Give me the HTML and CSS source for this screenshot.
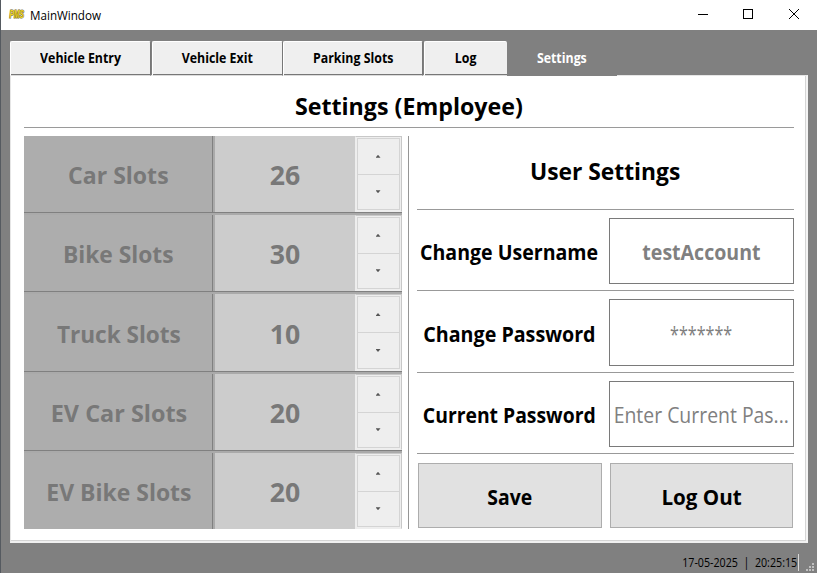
FILE: index.html
```
<!DOCTYPE html>
<html lang="en">
<head>
<meta charset="utf-8">
<title>MainWindow</title>
<link rel="stylesheet" href="styles.css">
</head>
<body>
<div class="window">
  <header class="titlebar">
    <svg class="app-icon" width="18" height="13" viewBox="0 0 18 13">
      <text class="logo" x="0.500" y="10" textLength="14.500" lengthAdjust="spacingAndGlyphs">PMS</text>
    </svg>
    <span class="title"><span class="t-title">MainWindow</span></span>
    <svg class="controls" width="103" height="12" viewBox="0 0 103 12" fill="none" stroke="#000">
      <path d="M0 6.500h10"/>
      <rect x="45.500" y="1.500" width="9" height="9"/>
      <path d="M91 1l10 10M101 1L91 11"/>
    </svg>
  </header>
  <nav class="tabs">
    <div class="tab tab-entry"><span>Vehicle Entry</span></div>
    <div class="tab tab-exit"><span>Vehicle Exit</span></div>
    <div class="tab tab-parking"><span>Parking Slots</span></div>
    <div class="tab tab-log"><span>Log</span></div>
    <div class="tab tab-settings"><span>Settings</span></div>
  </nav>
  <main class="pane">
    <h1><span class="t-heading">Settings (Employee)</span></h1>
    <div class="columns">
      <section class="slots">
        <div class="slot"><div class="name"><span class="t-car">Car Slots</span></div><div class="value">26</div><div class="spin"><div class="step"><i class="up"></i></div><div class="step"><i class="down"></i></div></div></div>
        <div class="slot"><div class="name"><span class="t-bike">Bike Slots</span></div><div class="value">30</div><div class="spin"><div class="step"><i class="up"></i></div><div class="step"><i class="down"></i></div></div></div>
        <div class="slot"><div class="name"><span class="t-truck">Truck Slots</span></div><div class="value">10</div><div class="spin"><div class="step"><i class="up"></i></div><div class="step"><i class="down"></i></div></div></div>
        <div class="slot"><div class="name"><span class="t-evcar">EV Car Slots</span></div><div class="value">20</div><div class="spin"><div class="step"><i class="up"></i></div><div class="step"><i class="down"></i></div></div></div>
        <div class="slot"><div class="name"><span class="t-evbike">EV Bike Slots</span></div><div class="value">20</div><div class="spin"><div class="step"><i class="up"></i></div><div class="step"><i class="down"></i></div></div></div>
      </section>
      <section class="user">
        <h2><span class="t-user">User Settings</span></h2>
        <div class="field"><label><span class="t-cu">Change Username</span></label><div class="input strong"><span class="t-acc">testAccount</span></div></div>
        <div class="field tall"><label><span class="t-cp">Change Password</span></label><div class="input"><span class="t-stars">*******</span></div></div>
        <div class="field"><label><span class="t-curp">Current Password</span></label><div class="input"><span class="t-enter">Enter Current Pas...</span></div></div>
        <div class="buttons"><div class="button"><span class="t-save">Save</span></div><div class="button"><span class="t-logout">Log Out</span></div></div>
      </section>
    </div>
  </main>
  <footer class="status">
    <span class="clock"><span class="t-clock">17-05-2025&nbsp; |&nbsp; 20:25:15</span></span>
    <svg class="grip" width="9" height="9" viewBox="0 0 9 9" fill="#bfbfbf"><path d="M6 0h2v2H6zM3 3h2v2H3zM6 3h2v2H6zM0 6h2v2H0zM3 6h2v2H3zM6 6h2v2H6z"/></svg>
  </footer>
</div>
</body>
</html>
```
FILE: styles.css
```
* { box-sizing: border-box; }
body { margin: 0; font-family: "Open Sans", "Noto Sans", sans-serif; color: #000; }
span { white-space: nowrap; }
.window { width: 817px; height: 573px; background: #808080; border-left: 1px solid #555a60; display: flex; flex-direction: column; overflow: hidden; }
.titlebar { height: 30px; flex: none; background: #fff; display: flex; align-items: center; padding: 0 16px 2px 8px; }
.app-icon { margin-right: 3px; overflow: visible; }
.logo { font: italic 900 10px "Liberation Sans", sans-serif; fill: #f0d828; stroke: #6e5f1c; stroke-width: 1.2px; paint-order: stroke; }
.title { flex: 1; font-size: 12px; padding-top: 2px; }
.tabs { display: flex; height: 35px; margin: 11px 0 0 9px; flex: none; position: relative; z-index: 1; }
.tab { height: 35px; display: flex; align-items: center; justify-content: center; background: #efefef; font-size: 13.3px; font-weight: 700; border-top: 1px solid #fff; border-left: 1px solid #fff; border-right: 1px solid #777; border-bottom: 1px solid #dcdcdc; box-shadow: inset 0 -1px #777; border-radius: 2px 2px 0 0; margin-right: 1px; padding-bottom: 1px; }
.tab span { transform: scaleX(.93); }
.tab-entry { width: 141px; }
.tab-exit { width: 131px; margin-right: 0; }
.tab-parking { width: 140px; }
.tab-log { width: 83px; margin: 0; border-right: 0; }
.tab-settings { width: 110px; height: 35px; background: #808080; color: #fff; border: 0; box-shadow: none; margin: 0; }
.pane { margin: -1px 0 0 9px; width: 798px; height: 468px; flex: none; background: #fff; border: 1px solid #e6e6e6; border-right: 2px solid #f4f4f4; border-bottom: 2px solid #f0f0f0; box-shadow: inset -1px -1px #d5d5d5; padding: 9px 12px 0 13px; }
h1, h2 { margin: 0; font-size: 24px; line-height: 42px; text-align: center; }
h1 span, h2 span { display: inline-block; }
h1 { height: 43px; border-bottom: 1px solid #9a9a9a; }
.columns { display: flex; margin-top: 8px; height: 393px; }
.slots { width: 378px; display: grid; grid-template-rows: 79px 79px 80px 79px 76px; background: #adadad; color: #787878; font-weight: 700; }
.slot { display: grid; grid-template-columns: 191px 140px 47px; }
.slot:not(:last-child) { border-bottom: 2px solid #aaa; box-shadow: inset 0 -1px #808080; }
.name, .value { display: flex; align-items: center; justify-content: center; padding-top: 1px; }
.name { font-size: 24px; border-right: 2px solid #aaa; box-shadow: inset -1px 0 #808080; }
.value { background: #ccc; font-size: 26.67px; }
.slot:not(:last-child) .value, .slot:not(:last-child) .name { margin-bottom: 1px; }
.spin { border: 1px solid #ededed; border-right: 1px solid #c8c8c8; border-top: 1px solid #c8c8c8; background: #eee; display: flex; flex-direction: column; padding: 1px; }
.slot:not(:last-child) .spin { margin-bottom: 1px; }
.step { flex: 1; border: 1px solid #d4d4d4; display: flex; align-items: center; justify-content: center; padding-right: 1px; }
.step + .step { border-top: 0; }
.up, .down { width: 5px; height: 3px; background: #555; clip-path: polygon(50% 0, 100% 100%, 0 100%); }
.down { clip-path: polygon(0 0, 100% 0, 50% 100%); }
.user { width: 386px; margin-left: 6px; padding-left: 8px; border-left: 1px solid #969696; }
h2 { height: 74px; line-height: 70px; border-bottom: 1px solid #999; }
.field { height: 81px; display: flex; padding: 8px 0 6px; border-bottom: 1px solid #999; }
.field.tall { height: 82px; }
label { width: 192px; display: flex; justify-content: center; align-items: center; padding: 1px 7px 0 0; font-size: 21.33px; font-weight: 700; }
.input { width: 185px; border: 1px solid #7a7a7a; color: #808080; font-size: 21.33px; display: flex; align-items: center; justify-content: center; padding-top: 1px; }
.strong { font-weight: 700; }
.buttons { display: flex; gap: 8px; padding: 9px 1px 0; }
.button { height: 65px; width: 184px; background: #e1e1e1; border: 1px solid #adadad; display: flex; align-items: center; justify-content: center; font-size: 21.33px; font-weight: 700; padding-top: 2px; }
.button + .button { width: 183px; }
.status { flex: 1; display: flex; justify-content: flex-end; align-items: flex-end; padding-right: 2px; }
.clock { height: 17px; line-height: 18px; font-size: 12px; border-right: 1px solid #d8d8d8; padding-right: 1px; margin-bottom: 2px; }
.grip { margin: 0 0 1px 7px; }

/* Condensed text widths */
.t-title { display: inline-block; transform: scaleX(.97); transform-origin: left; }
.t-heading { transform: scaleX(.967); }
.t-car { transform: scaleX(.96); }
.t-bike { transform: scaleX(.95); }
.t-truck { transform: scaleX(.94); }
.t-evcar { transform: scaleX(.975); }
.t-evbike { transform: scaleX(.957); }
.t-user { transform: scaleX(.95); }
.t-cu { transform: scaleX(.917); }
.t-cp { transform: scaleX(.922); }
.t-curp { transform: scaleX(.907); }
.t-acc { transform: scaleX(.917); }
.t-stars { transform: scaleX(.757); }
.t-enter { transform: scaleX(.91); }
.t-save { transform: scaleX(.91); }
.t-logout { transform: scaleX(.966); }
.t-clock { display: inline-block; transform: scaleX(.89); transform-origin: right; }
```
